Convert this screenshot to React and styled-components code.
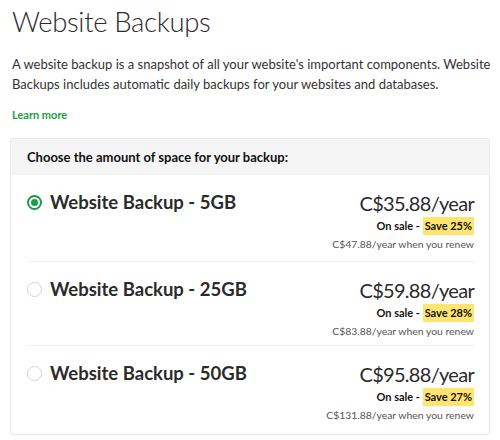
import { useState } from "react";
import styled, { createGlobalStyle, css } from "styled-components";

const plans = [
  { id: 1, name: "Website Backup - 5GB", price: "C$35.88/year", save: "Save 25%", renew: "C$47.88/year when you renew", h: 87 },
  { id: 2, name: "Website Backup - 25GB", price: "C$59.88/year", save: "Save 28%", renew: "C$83.88/year when you renew", h: 84 },
  { id: 3, name: "Website Backup - 50GB", price: "C$95.88/year", save: "Save 27%", renew: "C$131.88/year when you renew", h: 88 },
];

const GlobalStyle = createGlobalStyle`
  * { box-sizing: border-box; }
  body {
    margin: 0;
    background: #fff;
    font-family: Lato, "Noto Sans", sans-serif;
    color: #2b2b2b;
  }
`;

const Page = styled.div`
  width: 500px;
  padding: 3px 10px 0 10px;
`;

const Title = styled.h1`
  margin: 0 0 0 2px;
  font-size: 27.5px;
  font-weight: 300;
  letter-spacing: -0.35px;
  line-height: 38px;
  color: #2b2b2b;
`;

const Intro = styled.p`
  margin: 13px 0 0 2px;
  font-size: 13px;
  line-height: 20px;
  color: #333;
  white-space: nowrap;
`;

const LearnMore = styled.a`
  display: block;
  margin: 13px 0 0 2px;
  font-size: 11px;
  font-weight: 700;
  color: #1a9d44;
  text-decoration: none;
  line-height: 16px;
`;

const Card = styled.div`
  margin-top: 15px;
  border: 1px solid #ebebeb;
  border-radius: 2px;
`;

const CardHeader = styled.div`
  height: 36px;
  display: flex;
  align-items: center;
  padding-left: 16px;
  background: #f5f5f5;
  font-size: 13px;
  font-weight: 700;
  color: #111;
`;

const Rows = styled.div`
  padding: 0 15px 0 16px;
`;

const Row = styled.label`
  display: flex;
  justify-content: space-between;
  padding-top: 14px;
  height: ${({ h }) => h}px;
  cursor: pointer;
  ${({ last }) =>
    !last &&
    css`
      border-bottom: 1px solid #efefef;
    `}
`;

const Left = styled.div`
  display: flex;
  align-items: center;
  gap: 8px;
  height: 26px;
`;

const Radio = styled.span`
  width: 15px;
  height: 15px;
  border-radius: 50%;
  border: ${({ checked }) => (checked ? "2px solid #1a9d44" : "1.5px solid #cfd6da")};
  display: flex;
  align-items: center;
  justify-content: center;
  &::after {
    content: "";
    width: 7px;
    height: 7px;
    border-radius: 50%;
    background: #1a9d44;
    display: ${({ checked }) => (checked ? "block" : "none")};
  }
`;

const PlanName = styled.span`
  font-size: 18.5px;
  font-weight: 700;
  color: #2b2b2b;
`;

const Right = styled.div`
  display: flex;
  flex-direction: column;
  align-items: flex-end;
  margin-top: 1px;
`;

const Price = styled.div`
  font-size: 20px;
  font-weight: 400;
  letter-spacing: -0.7px;
  line-height: 26px;
  color: #2b2b2b;
`;

const Sale = styled.div`
  margin-top: 1px;
  font-size: 11px;
  font-weight: 700;
  line-height: 18px;
  color: #111;
`;

const Badge = styled.span`
  display: inline-block;
  background: #ffe56e;
  padding: 0 2px;
  line-height: 18px;
`;

const Renew = styled.div`
  font-size: 10.4px;
  line-height: 18px;
  color: #555;
`;

export default function App() {
  const [selected, setSelected] = useState(1);
  return (
    <Page>
      <GlobalStyle />
      <Title>Website Backups</Title>
      <Intro>
        A website backup is a snapshot of all your website's important components. Website
        <br />
        Backups includes automatic daily backups for your websites and databases.
      </Intro>
      <LearnMore href="#">Learn more</LearnMore>
      <Card>
        <CardHeader>Choose the amount of space for your backup:</CardHeader>
        <Rows>
          {plans.map((p, i) => (
            <Row key={p.id} h={p.h} last={i === plans.length - 1} onClick={() => setSelected(p.id)}>
              <Left>
                <Radio checked={selected === p.id} />
                <PlanName>{p.name}</PlanName>
              </Left>
              <Right>
                <Price>{p.price}</Price>
                <Sale>
                  On sale - <Badge>{p.save}</Badge>
                </Sale>
                <Renew>{p.renew}</Renew>
              </Right>
            </Row>
          ))}
        </Rows>
      </Card>
    </Page>
  );
}
